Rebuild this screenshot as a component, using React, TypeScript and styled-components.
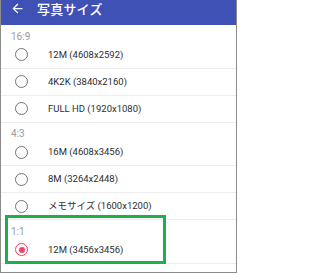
import { FC } from "react";
import styled, { createGlobalStyle } from "styled-components";

const GlobalStyle = createGlobalStyle`
    html, body {
        margin: 0;
        padding: 0;
        background: #ffffff;
    }
    * {
        box-sizing: border-box;
    }
`;

const Screen = styled.div`
    position: relative;
    width: 237px;
    height: 273px;
    overflow: hidden;
    background: #ffffff;
    border-left: 1px solid #8c8c8c;
    border-right: 1px solid #8c8c8c;
    border-bottom: 1px solid #8c8c8c;
    font-family: Roboto, "Noto Sans CJK JP", sans-serif;
`;

const Header = styled.header`
    height: 25px;
    background: #3f51b5;
    display: flex;
    align-items: center;
    padding: 0 0 8px 9px;
    gap: 12px;
    color: #ffffff;
`;

const Title = styled.h1`
    margin: 0;
    font-family: "Noto Sans CJK JP", sans-serif;
    font-size: 13px;
    font-weight: 500;
    line-height: 1;
    letter-spacing: 0.2px;
`;

const GroupLabel = styled.div`
    height: 16.5px;
    display: flex;
    align-items: flex-end;
    padding-left: 10px;
    font-size: 10px;
    color: #9a9a9a;
    line-height: 1;
`;

const Row = styled.div`
    height: 27px;
    display: flex;
    align-items: center;
    gap: 20px;
    padding-left: 14px;
    border-bottom: 1px solid #ececec;
`;

const Radio = styled.span<{ checked?: boolean }>`
    width: 13px;
    height: 13px;
    border-radius: 50%;
    border: 1.5px solid ${({ checked }) => (checked ? "#f0416f" : "#737373")};
    display: flex;
    align-items: center;
    justify-content: center;
    flex-shrink: 0;

    &::after {
        content: "";
        width: 6px;
        height: 6px;
        border-radius: 50%;
        background: #f0416f;
        display: ${({ checked }) => (checked ? "block" : "none")};
    }
`;

const OptionText = styled.span`
    font-size: 9.5px;
    color: #2e2e2e;
    font-family: Roboto, "Noto Sans CJK JP", sans-serif;
    line-height: 1;
`;

const Highlight = styled.div`
    position: absolute;
    left: 4px;
    top: 215px;
    width: 161px;
    height: 49px;
    border: 3px solid #1fae4b;
    pointer-events: none;
`;

const BackArrow: FC = () => (
    <svg width="15" height="15" viewBox="0 0 24 24" fill="#ffffff">
        <path d="M20 11H7.83l5.59-5.59L12 4l-8 8 8 8 1.41-1.41L7.83 13H20v-2z" />
    </svg>
);

type Group = { label: string; options: string[]; selected?: number };

const groups: Group[] = [
    { label: "16:9", options: ["12M (4608x2592)", "4K2K (3840x2160)", "FULL HD (1920x1080)"] },
    { label: "4:3", options: ["16M (4608x3456)", "8M (3264x2448)", "メモサイズ (1600x1200)"] },
    { label: "1:1", options: ["12M (3456x3456)"], selected: 0 },
];

const App: FC = () => {
    return (
        <>
            <GlobalStyle />
            <Screen>
                <Header>
                    <BackArrow />
                    <Title>写真サイズ</Title>
                </Header>
                {groups.map((g) => (
                    <section key={g.label}>
                        <GroupLabel>{g.label}</GroupLabel>
                        {g.options.map((o, i) => (
                            <Row key={o}>
                                <Radio checked={g.selected === i} />
                                <OptionText>{o}</OptionText>
                            </Row>
                        ))}
                    </section>
                ))}
                <Highlight />
            </Screen>
        </>
    );
};

export default App;
